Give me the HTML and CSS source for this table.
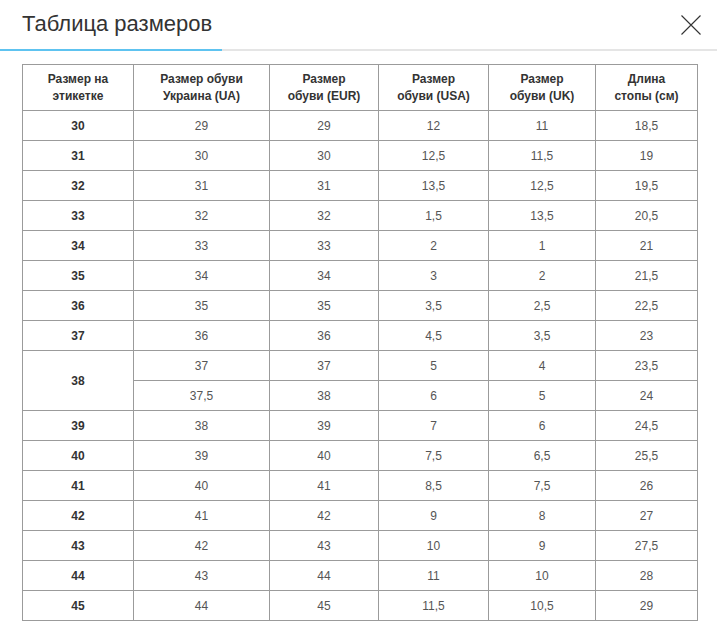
FILE: index.html
```html
<!DOCTYPE html>
<html lang="ru">
<head>
<meta charset="utf-8">
<title>Таблица размеров</title>
<link rel="stylesheet" href="styles.css">
</head>
<body>
<div class="modal">
  <div class="header">
    <h1 class="title">Таблица размеров</h1>
    <button class="close" aria-label="Закрыть">
      <svg width="20" height="20" viewBox="0 0 20 20"><path d="M0.5 0.5 L19.5 19.5 M19.5 0.5 L0.5 19.5" stroke="#333" stroke-width="1.1" fill="none"/></svg>
    </button>
  </div>
  <div class="tabline"><span class="active"></span></div>
  <div class="content">
    <table class="sizes">
      <thead>
        <tr>
          <th class="c1">Размер на<br>этикетке</th>
          <th class="c2">Размер обуви<br>Украина (UA)</th>
          <th class="c3">Размер<br>обуви (EUR)</th>
          <th class="c4">Размер<br>обуви (USA)</th>
          <th class="c5">Размер<br>обуви (UK)</th>
          <th class="c6">Длина<br>стопы (см)</th>
        </tr>
      </thead>
      <tbody>
        <tr><th>30</th><td>29</td><td>29</td><td>12</td><td>11</td><td>18,5</td></tr>
        <tr><th>31</th><td>30</td><td>30</td><td>12,5</td><td>11,5</td><td>19</td></tr>
        <tr><th>32</th><td>31</td><td>31</td><td>13,5</td><td>12,5</td><td>19,5</td></tr>
        <tr><th>33</th><td>32</td><td>32</td><td>1,5</td><td>13,5</td><td>20,5</td></tr>
        <tr><th>34</th><td>33</td><td>33</td><td>2</td><td>1</td><td>21</td></tr>
        <tr><th>35</th><td>34</td><td>34</td><td>3</td><td>2</td><td>21,5</td></tr>
        <tr><th>36</th><td>35</td><td>35</td><td>3,5</td><td>2,5</td><td>22,5</td></tr>
        <tr><th>37</th><td>36</td><td>36</td><td>4,5</td><td>3,5</td><td>23</td></tr>
        <tr><th rowspan="2">38</th><td>37</td><td>37</td><td>5</td><td>4</td><td>23,5</td></tr>
        <tr><td>37,5</td><td>38</td><td>6</td><td>5</td><td>24</td></tr>
        <tr><th>39</th><td>38</td><td>39</td><td>7</td><td>6</td><td>24,5</td></tr>
        <tr><th>40</th><td>39</td><td>40</td><td>7,5</td><td>6,5</td><td>25,5</td></tr>
        <tr><th>41</th><td>40</td><td>41</td><td>8,5</td><td>7,5</td><td>26</td></tr>
        <tr><th>42</th><td>41</td><td>42</td><td>9</td><td>8</td><td>27</td></tr>
        <tr><th>43</th><td>42</td><td>43</td><td>10</td><td>9</td><td>27,5</td></tr>
        <tr><th>44</th><td>43</td><td>44</td><td>11</td><td>10</td><td>28</td></tr>
        <tr><th>45</th><td>44</td><td>45</td><td>11,5</td><td>10,5</td><td>29</td></tr>
      </tbody>
    </table>
  </div>
</div>
</body>
</html>
```

FILE: styles.css
```css
* { box-sizing: border-box; }
html, body { margin: 0; padding: 0; background: #fff; }
body {
  font-family: "Liberation Sans", Arial, sans-serif;
  color: #333;
  width: 717px;
  height: 630px;
  overflow: hidden;
}
.modal { width: 717px; }
.header {
  display: flex;
  align-items: center;
  justify-content: space-between;
  height: 49px;
  padding: 0 16px 0 22px;
}
.title {
  margin: 0;
  font-size: 22px;
  font-weight: normal;
  color: #333;
  line-height: 1;
  padding-bottom: 1px;
}
.close {
  border: 0;
  background: none;
  padding: 0;
  width: 20px;
  height: 20px;
  display: block;
  cursor: pointer;
}
.close svg { display: block; }
.tabline {
  height: 2px;
  background: #e5e5e5;
  display: flex;
}
.tabline .active {
  width: 222px;
  background: #5ec3f0;
}
.content { padding: 13px 20px 0 22px; }
.sizes {
  border-collapse: collapse;
  width: 675px;
  table-layout: fixed;
  font-size: 12px;
}
.sizes th, .sizes td {
  border: 1px solid #9b9b9b;
  text-align: center;
  padding: 0;
  height: 30px;
}
.sizes thead th {
  height: 46px;
  font-weight: bold;
  color: #333;
  line-height: 17px;
  vertical-align: middle;
  padding-top: 1px;
}
.sizes tbody th { font-weight: bold; color: #333; }
.sizes td { color: #555; }
.c1 { width: 111px; }
.c2 { width: 136px; }
.c3 { width: 109px; }
.c4 { width: 110px; }
.c5 { width: 107px; }
.c6 { width: 102px; }
```
